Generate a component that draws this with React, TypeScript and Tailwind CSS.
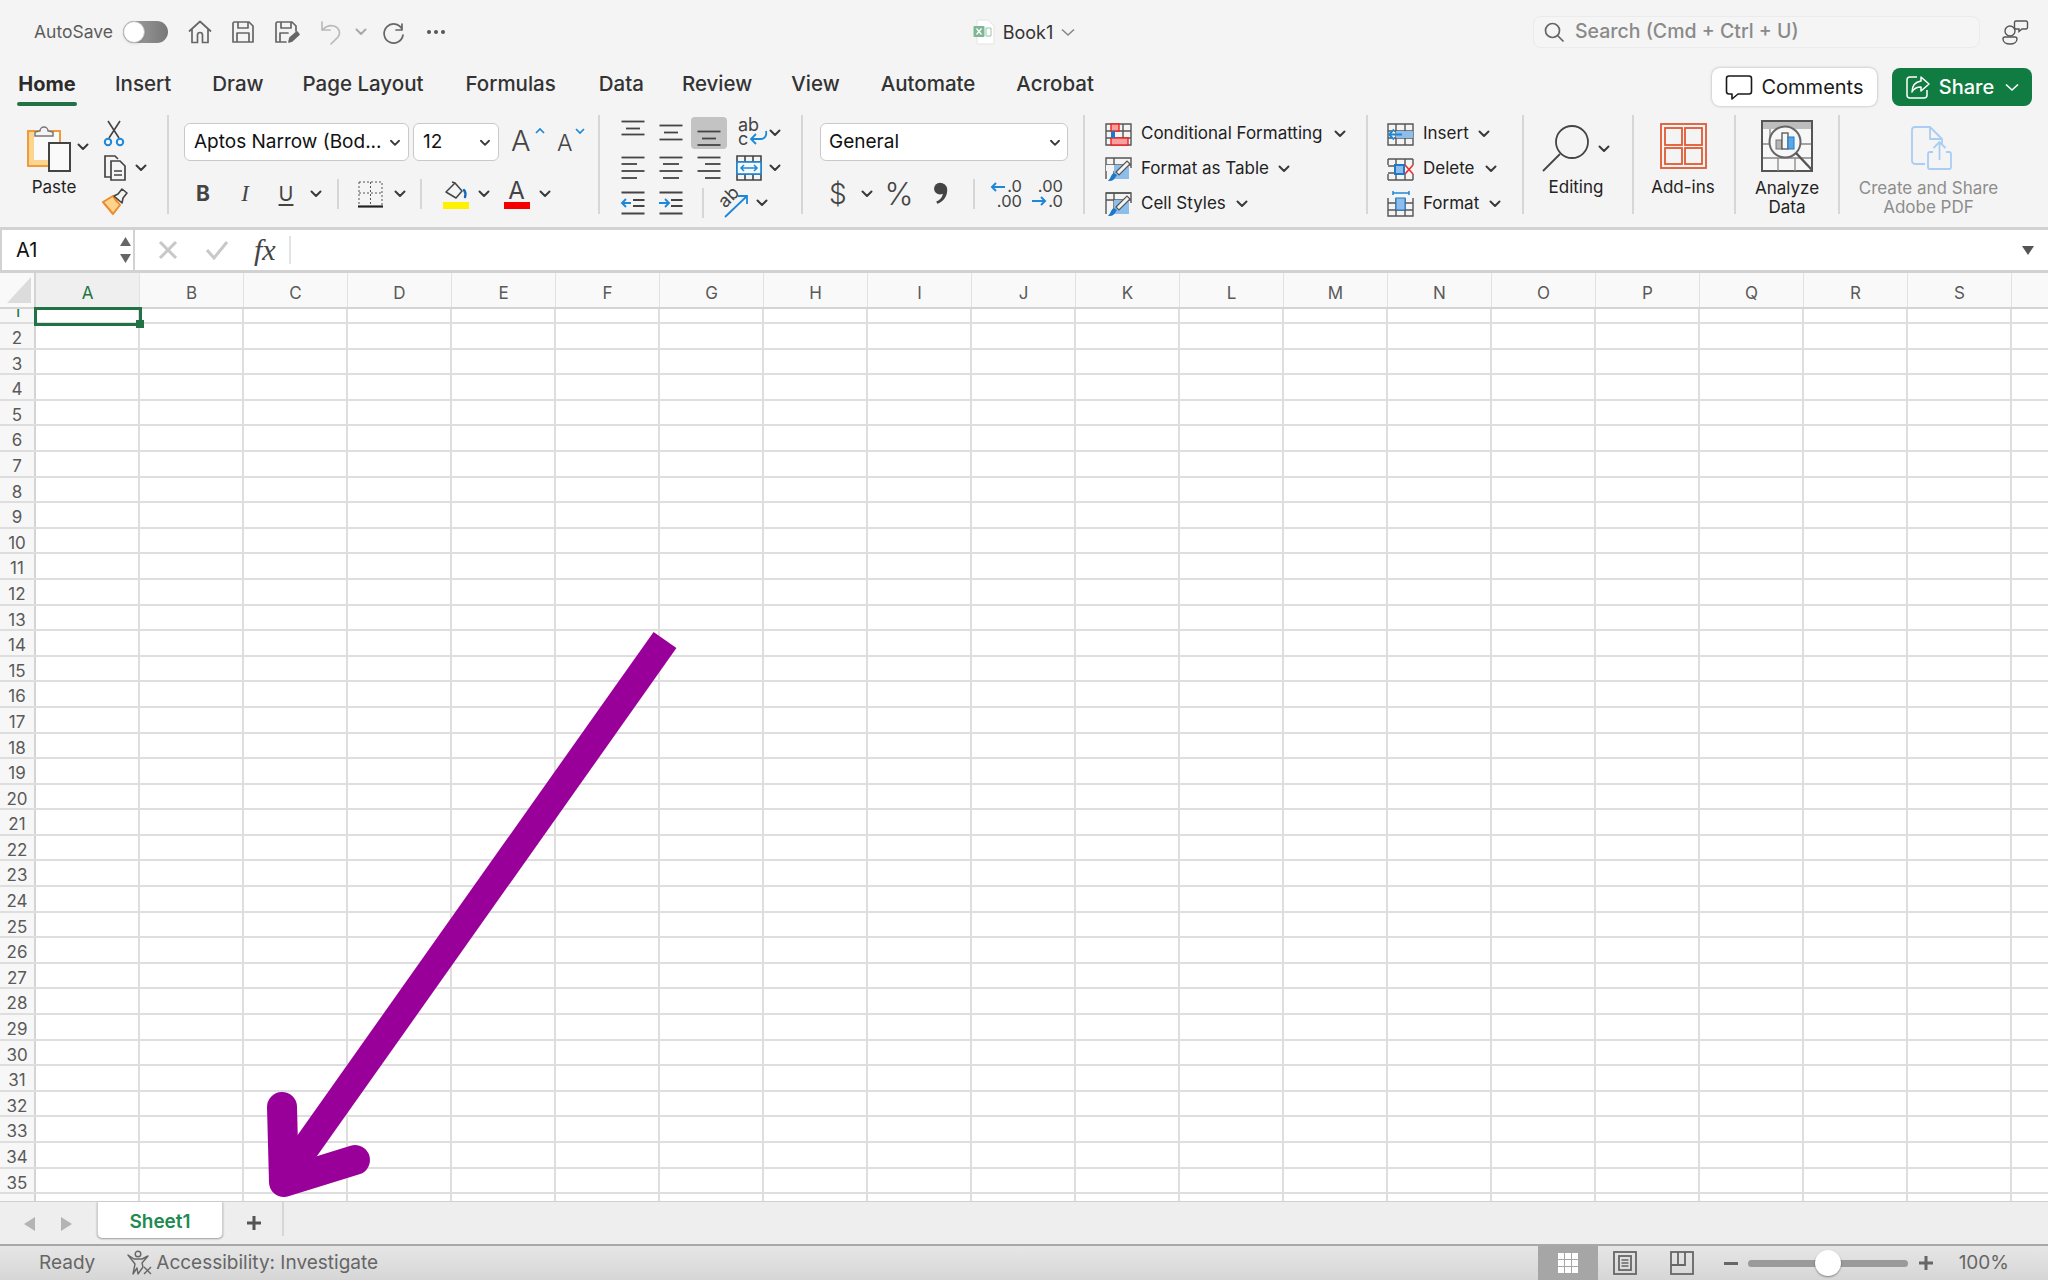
import React from 'react'

const columns = ['A', 'B', 'C', 'D', 'E', 'F', 'G', 'H', 'I', 'J', 'K', 'L', 'M', 'N', 'O', 'P', 'Q', 'R', 'S']
const rows = Array.from({ length: 36 }, (_, i) => i + 1)

const Chev = ({ className = '' }: { className?: string }) => (
    <svg className={`w-[12px] h-[8px] shrink-0 ${className}`} viewBox="0 0 12 8" fill="none">
        <path d="M1.5 1.5 6 6l4.5-4.5" stroke="#3a3a3a" strokeWidth="2" strokeLinecap="round" strokeLinejoin="round" />
    </svg>
)

const Sep = () => <div className="w-[2px] h-[99px] bg-[#d6d6d6] shrink-0" />
const SmallSep = () => <div className="w-[2px] h-[30px] bg-[#d6d6d6] shrink-0" />

const Lines = ({ lines }: { lines: number[][] }) => (
    <svg className="w-[28px] h-[28px]" viewBox="0 0 28 28" fill="none" stroke="#444" strokeWidth="1.8">
        {lines.map(([a, b, y], i) => <path key={i} d={`M${a} ${y}H${b}`} />)}
    </svg>
)

const TitleIcon = ({ children }: { children: React.ReactNode }) => (
    <svg className="w-[28px] h-[28px] shrink-0" viewBox="0 0 28 28" fill="none" stroke="#666" strokeWidth="1.7" strokeLinejoin="round" strokeLinecap="round">
        {children}
    </svg>
)

const TitleBar = () => (
    <div className="flex items-center h-[60px] pt-[4px] shrink-0">
        <span className="ml-[34px] w-[89px] text-[17.5px] text-[#5c5c5c]">AutoSave</span>
        <div className="w-[45px] h-[22px] rounded-full bg-gradient-to-r from-[#a8a8a8] to-[#777] flex items-center">
            <div className="w-[22px] h-[22px] rounded-full bg-white border border-[#bbb] shadow" />
        </div>
        <div className="ml-[18px]">
            <TitleIcon><path d="M3.5 13 14 3.5 24.500 13M6 11v13.500h5.500V17a2.500 2.500 0 0 1 5 0v7.500H22V11" /></TitleIcon>
        </div>
        <div className="ml-[15px]">
            <TitleIcon><path d="M5 4h15l4 4v16H4V5z M9 4v6h10V4 M8 24v-9h12v9" /></TitleIcon>
        </div>
        <div className="ml-[15px]">
            <TitleIcon>
                <path d="M14 24H4V5l1-1h15l4 4v5M9 4v6h10V4M8 24v-9h8" />
                <path d="m17 24 1-4 7-6 2 2.500-7 6.500z" fill="#666" />
            </TitleIcon>
        </div>
        <div className="ml-[18px] opacity-40">
            <TitleIcon><path d="M4 4v8h8M4.500 12C8 8 12 7 16 8c5 1.500 7 7 4 11l-7 7" /></TitleIcon>
        </div>
        <Chev className="ml-[9px] opacity-40" />
        <div className="ml-[13px]">
            <TitleIcon><path d="M22 6v6h-6M22 11a9.500 9.500 0 1 0 1 6" /></TitleIcon>
        </div>
        <div className="ml-[19px] flex gap-[3px]">
            <div className="w-[4px] h-[4px] rounded-full bg-[#555]" />
            <div className="w-[4px] h-[4px] rounded-full bg-[#555]" />
            <div className="w-[4px] h-[4px] rounded-full bg-[#555]" />
        </div>
        <div className="ml-[528px] flex items-center">
            <svg className="w-[22px] h-[26px] shrink-0" viewBox="0 0 22 26">
                <path d="M4 1h11l6 6v18H4z" fill="#fff" stroke="#e4e4e4" />
                <rect x="0.500" y="7" width="11" height="11" rx="1" fill="#7fb796" />
                <path d="M3.500 9.500l5 6M8.500 9.500l-5 6" stroke="#fff" strokeWidth="1.300" />
                <path d="M13 9h5v8h-5z" fill="none" stroke="#98c4aa" />
            </svg>
            <span className="w-[66px] text-center text-[18px] text-[#333]">Book1</span>
            <svg className="w-[14px] h-[9px]" viewBox="0 0 14 9" fill="none"><path d="M1 1.500 7 7l6-5.500" stroke="#888" strokeWidth="1.600" /></svg>
        </div>
        <div className="ml-[458px] w-[447px] h-[32px] rounded-[8px] border border-[#ebebeb] flex items-center bg-[#f5f5f5]">
            <svg className="ml-[9px] w-[22px] h-[22px] shrink-0" viewBox="0 0 22 22" fill="none" stroke="#666" strokeWidth="1.700"><circle cx="9.500" cy="9.500" r="7" /><path d="m14.500 14.500 6 6" /></svg>
            <span className="ml-[10px] text-[19.500px] font-medium text-[#8a8a8a] whitespace-nowrap">Search (Cmd + Ctrl + U)</span>
        </div>
        <svg className="ml-[21px] w-[28px] h-[28px] shrink-0" viewBox="0 0 28 28" fill="none" stroke="#555" strokeWidth="1.400">
            <circle cx="9" cy="13" r="5" /><path d="M2 21c0-1 1-2 2-2h10c1 0 2 1 2 2 0 3-3 5-7 5s-7-2-7-5z" />
            <path d="M15 3h10a1.500 1.500 0 0 1 1.500 1.500v5A1.500 1.500 0 0 1 25 11h-4l-3 2.500V11h-3a1.500 1.500 0 0 1-1.500-1.500v-5A1.500 1.500 0 0 1 15 3z" />
        </svg>
    </div>
)

const tabs = [
    { name: 'Insert', cls: 'ml-[38px]' },
    { name: 'Draw', cls: 'ml-[41px]' },
    { name: 'Page Layout', cls: 'ml-[39px]' },
    { name: 'Formulas', cls: 'ml-[42px]' },
    { name: 'Data', cls: 'ml-[43px]' },
    { name: 'Review', cls: 'ml-[38px]' },
    { name: 'View', cls: 'ml-[39px]' },
    { name: 'Automate', cls: 'ml-[41px]' },
    { name: 'Acrobat', cls: 'ml-[41px]' },
]

const TabRow = () => (
    <div className="flex h-[48px] pl-[17px] shrink-0 items-start">
        <div className="flex flex-col items-center w-[60px] mt-[8px]">
            <span className="text-[20px] leading-[32px] font-bold text-[#2b2b2b]">Home</span>
            <div className="w-[60px] h-[4px] mt-[2px] rounded-full bg-[#217346]" />
        </div>
        {tabs.map(t => (
            <span key={t.name} className={`${t.cls} mt-[8px] text-[20.5px] leading-[32px] font-medium text-[#333] whitespace-nowrap`}>{t.name}</span>
        ))}
        <div className="ml-auto flex gap-[15px] pr-[16px] mt-[8px]">
            <div className="h-[38px] w-[165px] rounded-[8px] bg-white shadow-[0_0_3px_rgba(0,0,0,0.3)] flex items-center justify-center">
                <svg className="w-[28px] h-[26px]" viewBox="0 0 28 26" fill="none" stroke="#1a1a1a" strokeWidth="1.600" strokeLinejoin="round">
                    <path d="M4 2h20a2.500 2.500 0 0 1 2.500 2.500v13A2.500 2.500 0 0 1 24 20H13l-6 5v-5H4a2.500 2.500 0 0 1-2.500-2.500v-13A2.500 2.500 0 0 1 4 2z" />
                </svg>
                <span className="ml-[8px] text-[20px] text-[#1a1a1a]">Comments</span>
            </div>
            <div className="h-[38px] w-[140px] rounded-[8px] bg-[#107c41] flex items-center justify-center text-white">
                <svg className="w-[26px] h-[26px]" viewBox="0 0 26 26" fill="none" stroke="#fff" strokeWidth="1.500" strokeLinejoin="round">
                    <path d="M12 3H5a3 3 0 0 0-3 3v15a3 3 0 0 0 3 3h14a3 3 0 0 0 3-3v-5" />
                    <path d="M16 3l8 7-8 7v-4c-4 0-7 1-9 5 0-6 3-10 9-11z" />
                </svg>
                <span className="ml-[8px] text-[20px] font-medium">Share</span>
                <svg className="ml-[11px] w-[14px] h-[9px]" viewBox="0 0 14 9" fill="none"><path d="M1 1.500 7 7l6-5.500" stroke="#fff" strokeWidth="1.600" /></svg>
            </div>
        </div>
    </div>
)

const ClipboardGroup = () => (
    <div className="flex w-[167px] shrink-0">
        <div className="w-[96px] flex flex-col">
            <div className="flex items-center pl-[25px] pt-[7px]">
                <svg className="w-[47px] h-[50px] shrink-0" viewBox="25 122 47 50" fill="none">
                    <rect x="28" y="131" width="32" height="35" fill="#fbd58e" stroke="#ef9a3d" strokeWidth="2" />
                    <rect x="34" y="132" width="25" height="28" fill="#fafafa" />
                    <path d="M35 136v-4l5-1a4 4 0 0 1 8 0l5 1v4z" fill="#f4f4f4" stroke="#777" strokeWidth="1.500" />
                    <rect x="49" y="143" width="21" height="28" fill="#fafafa" stroke="#444" strokeWidth="2" />
                </svg>
                <Chev className="ml-[5px]" />
            </div>
            <div className="w-[108px] text-center text-[17px] leading-[24px] mt-[3px] text-[#222]">Paste</div>
        </div>
        <div className="flex flex-col">
            <div className="h-[35px] pl-[5px] flex items-center">
                <svg className="w-[26px] h-[28px]" viewBox="0 0 26 28" fill="none">
                    <path d="M7 2l11 17M19 2 8 19" stroke="#444" strokeWidth="1.600" />
                    <circle cx="7" cy="23" r="3.200" stroke="#1e88d8" strokeWidth="2" />
                    <circle cx="19" cy="23" r="3.200" stroke="#1e88d8" strokeWidth="2" />
                </svg>
            </div>
            <div className="h-[35px] pl-[5px] flex items-center">
                <svg className="w-[26px] h-[28px]" viewBox="0 0 26 28" fill="none" stroke="#444" strokeWidth="1.700">
                    <path d="M10 23H4V2h10l3 3" />
                    <path d="M10 7h9l5 5v14H10z" fill="#f4f4f4" />
                    <path d="M13 17h8M13 21h8" strokeWidth="1.300" />
                </svg>
                <Chev className="ml-[8px]" />
            </div>
            <div className="h-[31px] pl-[5px] flex items-center">
                <svg className="w-[28px] h-[28px]" viewBox="0 0 28 28" fill="none">
                    <path d="m2 15 10-6 7 9-7 9z" fill="#fbd58e" stroke="#ef8a2d" strokeWidth="2" strokeLinejoin="round" />
                    <path d="m12 9 4 6" stroke="#ef8a2d" strokeWidth="2" />
                    <path d="m13 9 4-2 4-5 5 4-4 5-1 5z" fill="#f4f4f4" stroke="#444" strokeWidth="1.600" strokeLinejoin="round" />
                </svg>
            </div>
        </div>
    </div>
)

const FontGroup = () => (
    <div className="w-[429px] shrink-0 flex flex-col pt-[8px] pl-[15px]">
        <div className="flex items-center h-[38px]">
            <div className="w-[225px] h-[38px] pt-[1px] rounded-[6px] border border-[#c9c9c9] bg-white flex items-center pl-[9px] pr-[7px] justify-between">
                <span className="text-[19px] text-[#111] whitespace-nowrap">Aptos Narrow (Bod...</span>
                <Chev className="scale-90" />
            </div>
            <div className="ml-[4px] w-[86px] h-[38px] pt-[1px] rounded-[6px] border border-[#c9c9c9] bg-white flex items-center pl-[9px] pr-[7px] justify-between">
                <span className="text-[19px] text-[#111]">12</span>
                <Chev className="scale-90" />
            </div>
            <div className="ml-[12px] w-[28px] h-[30px] relative">
                <span className="absolute left-0 top-[-2px] text-[29px] leading-[32px] font-light text-[#444]">A</span>
                <svg className="absolute right-[-6px] top-[0px] w-[10px] h-[7px]" viewBox="0 0 10 7" fill="none"><path d="m1 6 4-4 4 4" stroke="#1e88d8" strokeWidth="1.700" /></svg>
            </div>
            <div className="ml-[18px] w-[26px] h-[30px] relative">
                <span className="absolute left-0 top-0 text-[23px] leading-[32px] font-light text-[#444]">A</span>
                <svg className="absolute right-[-2px] top-[1px] w-[10px] h-[7px]" viewBox="0 0 10 7" fill="none"><path d="m1 1 4 4 4-4" stroke="#1e88d8" strokeWidth="1.700" /></svg>
            </div>
        </div>
        <div className="flex items-center h-[38px] mt-[14px]">
            <span className="ml-[12px] w-[14px] text-center text-[21px] font-bold text-[#444]">B</span>
            <span className="ml-[28px] w-[14px] text-center text-[23px] italic font-['Liberation_Serif',serif] text-[#444]">I</span>
            <span className="ml-[26px] w-[16px] text-center text-[20px] underline underline-offset-[3px] text-[#444]">U</span>
            <Chev className="ml-[16px]" />
            <div className="ml-[15px]"><SmallSep /></div>
            <svg className="ml-[18px] w-[27px] h-[30px]" viewBox="0 0 27 30" fill="none">
                <path d="M2 3h23v23M2 3v23M13.500 3v23M2 14h23" stroke="#555" strokeDasharray="2 2" />
                <path d="M1 27.500h25" stroke="#222" strokeWidth="2.200" />
            </svg>
            <Chev className="ml-[10px]" />
            <div className="ml-[14px]"><SmallSep /></div>
            <div className="ml-[20px] w-[27px] flex flex-col items-center">
                <svg className="w-[24px] h-[22px]" viewBox="0 0 24 22" fill="none">
                    <path d="m2 12 9-9 7 8-6 7z" stroke="#444" strokeWidth="1.500" strokeLinejoin="round" />
                    <path d="M8 2l3 1" stroke="#444" strokeWidth="1.500" />
                    <path d="M20 10c1.500 2 2 4 1 7" stroke="#1565b8" strokeWidth="2.400" strokeLinecap="round" />
                </svg>
                <div className="w-[26px] h-[7px] bg-[#fff200]" />
            </div>
            <Chev className="ml-[9px]" />
            <div className="ml-[13px] w-[27px] flex flex-col items-center">
                <span className="text-[24px] leading-[22px] text-[#444]">A</span>
                <div className="w-[26px] h-[7px] bg-[#f50000]" />
            </div>
            <Chev className="ml-[9px]" />
        </div>
    </div>
)

const AlignGroup = () => (
    <div className="w-[201px] shrink-0 flex flex-col pl-[14px]">
        <div className="flex items-center h-[35px]">
            <div className="w-[38px] flex justify-center"><Lines lines={[[2.5, 25.5, 2.5], [7, 21, 9.5], [2.5, 25.5, 15.5]]} /></div>
            <div className="w-[38px] flex justify-center"><Lines lines={[[2.5, 25.5, 6.5], [7, 21, 13.5], [2.5, 25.5, 20.5]]} /></div>
            <div className="w-[36px] mx-[1px] h-[32px] flex justify-center items-center rounded-[4px] bg-[#c3c3c3]"><Lines lines={[[2.5, 25.5, 12.5], [7, 21, 19.5], [2.5, 25.5, 26]]} /></div>
            <div className="w-[41px] pl-[10px] h-[32px] relative text-[#444] text-[18px] leading-[14px] pt-[1px]">
                <div>ab<br />c</div>
                <svg className="absolute left-[20px] top-[12px] w-[22px] h-[20px]" viewBox="0 0 22 20" fill="none"><path d="M18 2c1 4-1 8-5 8H4m4-5-5 5 5 5" stroke="#1e88d8" strokeWidth="1.800" /></svg>
            </div>
            <Chev />
        </div>
        <div className="flex items-center h-[35px]">
            <div className="w-[38px] flex justify-center"><Lines lines={[[2.5, 25.5, 3.5], [2.5, 18, 10], [2.5, 25.5, 17], [2.5, 18, 24]]} /></div>
            <div className="w-[38px] flex justify-center"><Lines lines={[[2.5, 25.5, 3.5], [6, 22, 10], [2.5, 25.5, 17], [6, 22, 24]]} /></div>
            <div className="w-[38px] flex justify-center"><Lines lines={[[2.5, 25.5, 3.5], [10, 25.5, 10], [2.5, 25.5, 17], [10, 25.5, 24]]} /></div>
            <div className="w-[41px] flex justify-center">
                <svg className="w-[26px] h-[26px]" viewBox="0 0 26 26" fill="none">
                    <path d="M1 1h24v24H1zM1 7h24M1 19h24M9 1v6M17 1v6M9 19v6M17 19v6" stroke="#444" strokeWidth="1.600" />
                    <rect x="1" y="7" width="24" height="12" stroke="#1e88d8" strokeWidth="1.600" fill="#f4f9fd" />
                    <path d="M5 13h16M8 10l-3 3 3 3M18 10l3 3-3 3" stroke="#1e88d8" strokeWidth="1.500" />
                </svg>
            </div>
            <Chev />
        </div>
        <div className="flex items-center h-[35px]">
            <div className="w-[38px] flex justify-center">
                <svg className="w-[28px] h-[28px]" viewBox="0 0 28 28" fill="none">
                    <path d="M2.500 3.500h23M14 11h11.500M14 17h11.500M2.500 24.500h23" stroke="#444" strokeWidth="1.800" />
                    <path d="M12 14H3m4-4-4 4 4 4" stroke="#1e88d8" strokeWidth="1.900" />
                </svg>
            </div>
            <div className="w-[38px] flex justify-center">
                <svg className="w-[28px] h-[28px]" viewBox="0 0 28 28" fill="none">
                    <path d="M2.500 3.500h23M14 11h11.500M14 17h11.500M2.500 24.500h23" stroke="#444" strokeWidth="1.800" />
                    <path d="M2 14h10m-4-4 4 4-4 4" stroke="#1e88d8" strokeWidth="1.900" />
                </svg>
            </div>
            <div className="ml-[12px]"><SmallSep /></div>
            <div className="ml-[15px] w-[32px] h-[32px] relative">
                <span className="absolute left-[-1px] top-[0px] text-[18px] leading-[20px] text-[#444] -rotate-45">ab</span>
                <svg className="absolute left-0 top-0 w-[32px] h-[32px]" viewBox="0 0 32 32" fill="none"><path d="M6 30 28 9m-9 0h9v8" stroke="#1e88d8" strokeWidth="1.800" /></svg>
            </div>
            <Chev className="ml-[5px]" />
        </div>
    </div>
)

const NumberGroup = () => (
    <div className="w-[280px] shrink-0 flex flex-col pt-[8px] pl-[17px]">
        <div className="w-[248px] h-[38px] pt-[1px] rounded-[6px] border border-[#c9c9c9] bg-white flex items-center pl-[8px] pr-[6px] justify-between">
            <span className="text-[19px] text-[#111]">General</span>
            <Chev className="scale-90" />
        </div>
        <div className="flex items-center h-[38px] mt-[14px] text-[#444]">
            <span className="ml-[9px] w-[16px] text-center text-[28px] font-light leading-[38px]">$</span>
            <Chev className="ml-[16px]" />
            <span className="ml-[10px] w-[32px] text-center text-[31px] font-light leading-[38px]">%</span>
            <svg className="ml-[18px] w-[15px] h-[24px]" viewBox="0 0 14 22" fill="#444"><circle cx="6.500" cy="6" r="5.500" /><path d="M8 1c5 1 6 5 5 9-1 5-5 9-9 10l-1-2c3-1 5-3 6-6z" /></svg>
            <div className="ml-[25px]"><SmallSep /></div>
            <div className="ml-[19px] w-[28px] h-[30px] relative text-[16.500px] leading-[15px] text-right">
                <div>.0<br />.00</div>
                <svg className="absolute left-[-4px] top-[2px] w-[16px] h-[12px]" viewBox="0 0 16 12" fill="none"><path d="M15 6H2m4-4-4 4 4 4" stroke="#1e88d8" strokeWidth="2" /></svg>
            </div>
            <div className="ml-[13px] w-[28px] h-[30px] relative text-[16.500px] leading-[15px] text-right">
                <div>.00<br />.0</div>
                <svg className="absolute left-[-4px] top-[16px] w-[16px] h-[12px]" viewBox="0 0 16 12" fill="none"><path d="M1 6h13m-4-4 4 4-4 4" stroke="#1e88d8" strokeWidth="2" /></svg>
            </div>
        </div>
    </div>
)

const Cf = () => (
    <svg className="w-[27px] h-[23px] shrink-0" viewBox="0 0 27 23" fill="none">
        <path d="M1 1h25v21H1zM1 8h25M1 15h25M9 1v21M18 1v21" stroke="#555" strokeWidth="1.400" />
        <rect x="6" y="1" width="8" height="7" fill="#f7a0a0" stroke="#e22" strokeWidth="1.400" />
        <rect x="6" y="15" width="17" height="7" fill="#f7a0a0" stroke="#e22" strokeWidth="1.400" />
        <rect x="6" y="8" width="4" height="7" fill="#1e78c8" />
    </svg>
)

const Brush = ({ table }: { table: boolean }) => (
    <svg className="w-[27px] h-[25px] shrink-0" viewBox="0 0 27 25" fill="none">
        <path d="M1 22V1h25v10M1 8h25M9 1v21" stroke="#555" strokeWidth="1.400" />
        {!table && <path d="M1 1h25" stroke="#555" strokeWidth="1.400" />}
        <path d="M9 8h15v14H9z" fill="#8dbdea" />
        {table && <path d="M1 8h8v6H1z" fill="#f4f4f4" />}
        <path d="M3 24c3 0 5 0 7-3l2-3-3-2c-3 1-3 5-6 8z" fill="#1e78c8" />
        <path d="m11 15 11-11 3 3-11 11z" fill="#f4f4f4" stroke="#555" strokeWidth="1.200" />
    </svg>
)

const StylesGroup = () => (
    <div className="w-[281px] shrink-0 flex flex-col pl-[20px] pt-[1.500px] text-[17px] text-[#222]">
        <div className="flex items-center h-[35px]"><Cf /><span className="ml-[9px] whitespace-nowrap">Conditional Formatting</span><Chev className="ml-[11px]" /></div>
        <div className="flex items-center h-[35px]"><Brush table /><span className="ml-[9px] whitespace-nowrap">Format as Table</span><Chev className="ml-[9px]" /></div>
        <div className="flex items-center h-[35px]"><Brush table={false} /><span className="ml-[9px] whitespace-nowrap">Cell Styles</span><Chev className="ml-[10px]" /></div>
    </div>
)

const CellsGroup = () => (
    <div className="w-[154px] shrink-0 flex flex-col pl-[19px] pt-[1.500px] text-[17px] text-[#222]">
        <div className="flex items-center h-[35px]">
            <svg className="w-[27px] h-[23px] shrink-0" viewBox="0 0 27 23" fill="none">
                <path d="M1 1h25v21H1zM1 8h25M1 15h25M9 1v21M18 1v21" stroke="#555" strokeWidth="1.400" />
                <rect x="9" y="8" width="17" height="7" fill="#8dbdea" />
                <path d="M15 11.500H2m5-5-5 5 5 5" stroke="#1e88d8" strokeWidth="1.800" fill="#f4f4f4" />
            </svg>
            <span className="ml-[9px]">Insert</span><Chev className="ml-[9px]" />
        </div>
        <div className="flex items-center h-[35px]">
            <svg className="w-[27px] h-[23px] shrink-0" viewBox="0 0 27 23" fill="none">
                <path d="M1 1h25M1 22h25M1 1v6M1 16v6M9 1v6M18 1v6M9 16v6M18 16v6M1 8h9M1 15h9M26 1v6M26 16v6" stroke="#555" strokeWidth="1.400" />
                <rect x="8" y="7" width="9" height="9" fill="#8dbdea" stroke="#1e78c8" strokeWidth="2" />
                <path d="m18 7 8 9M26 7l-8 9" stroke="#ee3030" strokeWidth="1.700" />
            </svg>
            <span className="ml-[9px]">Delete</span><Chev className="ml-[10px]" />
        </div>
        <div className="flex items-center h-[35px]">
            <svg className="w-[27px] h-[26px] shrink-0" viewBox="0 0 27 26" fill="none">
                <path d="M1 7v18h25V7M1 12h25M1 19h25M9 7v18M18 7v18" stroke="#555" strokeWidth="1.400" />
                <rect x="9" y="7" width="9" height="12" fill="#8dbdea" stroke="#1e78c8" />
                <path d="M6 2h16M6 0v4M22 0v4" stroke="#1e88d8" strokeWidth="1.500" />
            </svg>
            <span className="ml-[9px]">Format</span><Chev className="ml-[10px]" />
        </div>
    </div>
)

const BigLabel = ({ children, className = '' }: { children: React.ReactNode; className?: string }) => (
    <div className={`text-center text-[17px] leading-[19px] text-[#222] ${className}`}>{children}</div>
)

const EditingGroup = () => (
    <div className="w-[108px] shrink-0 flex flex-col pt-[9px]">
        <div className="flex items-center h-[50px] pl-[17px]">
            <svg className="w-[50px] h-[50px]" viewBox="0 0 50 50" fill="none" stroke="#444" strokeWidth="1.800">
                <circle cx="31" cy="18" r="16" /><path d="M19 30 2 47" />
            </svg>
            <Chev className="ml-[7px]" />
        </div>
        <BigLabel className="w-[104px] mt-[4px]">Editing</BigLabel>
    </div>
)

const AddinsGroup = () => (
    <div className="w-[100px] pr-[2px] shrink-0 flex flex-col pt-[8px] items-center">
        <svg className="w-[47px] h-[46px] mb-[9px]" viewBox="0 0 47 46" fill="none" stroke="#e05a33" strokeWidth="1.800">
            <rect x="1" y="1" width="45" height="44" />
            <rect x="5" y="5" width="17" height="17" /><rect x="25" y="5" width="17" height="17" />
            <rect x="5" y="25" width="17" height="16" /><rect x="25" y="25" width="17" height="16" />
        </svg>
        <BigLabel>Add-ins</BigLabel>
    </div>
)

const AnalyzeGroup = () => (
    <div className="w-[102px] shrink-0 flex flex-col pt-[5px] items-center">
        <svg className="w-[52px] h-[52px] mb-[7px]" viewBox="0 0 52 52" fill="none">
            <rect x="1" y="1" width="50" height="50" stroke="#555" strokeWidth="2" fill="#f7f7f7" />
            <rect x="2" y="2" width="48" height="7" fill="#bdbdbd" />
            <path d="M2 24h48M2 38h48M17 38v13M34 38v13M9 9v15" stroke="#888" strokeWidth="1.300" />
            <circle cx="24" cy="22" r="15.500" fill="#f7f7f7" stroke="#666" strokeWidth="2" />
            <rect x="15" y="20" width="6" height="9" fill="#b5b5b5" stroke="#777" />
            <rect x="21" y="13" width="6" height="16" fill="#f7f7f7" stroke="#555" strokeWidth="1.300" />
            <rect x="27" y="17" width="6" height="12" fill="#5aa7e5" stroke="#1e78c8" />
            <path d="m35 33 16 17" stroke="#555" strokeWidth="2.400" />
        </svg>
        <BigLabel>Analyze<br />Data</BigLabel>
    </div>
)

const AdobeGroup = () => (
    <div className="flex-1 flex flex-col pt-[11px] pl-[2px] w-[180px]">
        <div className="w-[180px] flex justify-center mb-[7px]">
            <svg className="w-[42px] h-[46px]" viewBox="0 0 42 46" fill="none" stroke="#a9cdf5" strokeWidth="1.800" strokeLinejoin="round">
                <path d="M14 38H4a3 3 0 0 1-3-3V4a3 3 0 0 1 3-3h15l12 12v6M19 1v12h12" />
                <path d="M22 26h-3a2 2 0 0 0-2 2v13a2 2 0 0 0 2 2h19a2 2 0 0 0 2-2V28a2 2 0 0 0-2-2h-3M28.500 34V16m-6 6 6-6 6 6" />
            </svg>
        </div>
        <BigLabel className="w-[173px] !text-[#8d8d8d]">Create and Share<br />Adobe PDF</BigLabel>
    </div>
)

const Ribbon = () => (
    <div className="flex h-[122px] pt-[7px] shrink-0 border-b-[3px] border-[#d2d2d2] overflow-hidden">
        <ClipboardGroup />
        <Sep />
        <FontGroup />
        <Sep />
        <AlignGroup />
        <Sep />
        <NumberGroup />
        <Sep />
        <StylesGroup />
        <Sep />
        <CellsGroup />
        <Sep />
        <EditingGroup />
        <Sep />
        <AddinsGroup />
        <Sep />
        <AnalyzeGroup />
        <Sep />
        <AdobeGroup />
    </div>
)

const FormulaBar = () => (
    <div className="flex h-[43px] shrink-0 bg-white border-b-[3px] border-[#d2d2d2]">
        <div className="w-[135px] h-[40px] border-x-[2px] border-[#d2d2d2] flex items-center justify-between pl-[14px] pr-[1px]">
            <span className="text-[20px] text-[#111]">A1</span>
            <svg className="w-[13px] h-[28px]" viewBox="0 0 13 28" fill="#666"><path d="M6.500 1 12 10H1zM1 18h11l-5.500 9z" /></svg>
        </div>
        <svg className="ml-[23px] w-[20px] h-[20px] self-center" viewBox="0 0 20 20" fill="none" stroke="#c8c8c8" strokeWidth="3"><path d="m2 2 16 16M18 2 2 18" /></svg>
        <svg className="ml-[27px] w-[24px] h-[20px] self-center" viewBox="0 0 24 20" fill="none" stroke="#c8c8c8" strokeWidth="3"><path d="m2 10 7 8L22 2" /></svg>
        <span className="ml-[25px] self-center text-[30px] italic font-['Liberation_Serif',serif] text-[#444] leading-none">fx</span>
        <div className="ml-[13px] w-[2px] h-[28px] self-center bg-[#e3e3e3]" />
        <svg className="ml-auto mr-[14px] w-[12px] h-[9px] self-center" viewBox="0 0 12 9" fill="#555"><path d="M0 0h12L6 9z" /></svg>
    </div>
)

const Grid = () => (
    <div className="flex-1 min-h-0 overflow-hidden relative">
        <div className="flex h-[36px] bg-[#f9f9f9] border-b-2 border-[#d4d4d4]">
            <div className="w-[36px] shrink-0 border-r-2 border-[#d4d4d4] flex items-end justify-end pr-[3px] pb-[4px]">
                <svg className="w-[24px] h-[26px]" viewBox="0 0 24 26"><path d="M24 0v26H0z" fill="#dcdcdc" /></svg>
            </div>
            {columns.map(c => (
                <div key={c} className={`w-[104px] shrink-0 pt-[7px] border-r border-[#e2e2e2] flex items-center justify-center text-[17px] ${c === 'A' ? 'bg-[#efefef] text-[#217346]' : 'text-[#5a5a5a]'}`}>{c}</div>
            ))}
        </div>
        {rows.map(r => (
            <div key={r} className={`flex border-b-2 border-[#dedede] ${r === 1 ? 'h-[15px] items-end' : 'h-[25.6px]'}`}>
                <div className={`w-[36px] shrink-0 border-r-2 border-[#d4d4d4] bg-[#f7f7f7] text-[17px] text-center overflow-hidden self-stretch ${r === 1 ? 'text-[#217346]' : 'text-[#5a5a5a]'}`}>
                    <div className={`leading-[28px] ${r === 1 ? 'mt-[-12px]' : ''}`}>{r < 36 ? r : ''}</div>
                </div>
                {columns.map(c => <div key={c} className="w-[104px] shrink-0 self-stretch border-r-2 border-[#dedede] bg-white" />)}
                <div className="flex-1 self-stretch bg-white" />
            </div>
        ))}
        <div className="absolute left-[34px] top-[34px] w-[108px] h-[19px] border-[3px] border-[#217346]" />
        <div className="absolute left-[136px] top-[47px] w-[8px] h-[8px] bg-[#217346]" />
    </div>
)

const SheetBar = () => (
    <div className="flex h-[43px] shrink-0 bg-[#eeeeee] border-t border-[#d0d0d0]">
        <svg className="ml-[23px] mt-[14px] w-[13px] h-[16px]" viewBox="0 0 13 16" fill="#b4b4b4"><path d="M12 1v14L1 8z" /></svg>
        <svg className="ml-[24px] mt-[14px] w-[13px] h-[16px]" viewBox="0 0 13 16" fill="#b4b4b4"><path d="M1 1v14l11-7z" /></svg>
        <div className="ml-[24px] w-[126px] h-[36px] pt-[4px] rounded-b-[5px] bg-white shadow-[0_1px_2px_rgba(0,0,0,0.35)] border-x border-[#d0d0d0] flex items-center justify-center text-[19px] font-semibold text-[#1f8a52]">Sheet1</div>
        <svg className="ml-[22px] mt-[12px] w-[18px] h-[18px]" viewBox="0 0 18 18" fill="none" stroke="#555" strokeWidth="3"><path d="M9 2v14M2 9h14" /></svg>
        <div className="ml-[19px] w-[2px] h-[34px] bg-[#d6d6d6]" />
    </div>
)

const StatusBar = () => (
    <div className="flex h-[36px] shrink-0 items-center bg-gradient-to-b from-[#e6e6e6] to-[#d6d6d6] border-t-2 border-[#a8a8a8] text-[#666] text-[19px]">
        <span className="ml-[39px]">Ready</span>
        <svg className="ml-[31px] w-[26px] h-[26px]" viewBox="0 0 26 26" fill="none" stroke="#666" strokeWidth="1.400" strokeLinejoin="round">
            <circle cx="12" cy="4" r="2.800" />
            <path d="M2 5l6 4 8 0 6-3-6 7 1 4-5 7-1-6-4 6 2-10z" />
            <path d="m18 17 7 7M25 17l-7 7" />
        </svg>
        <span className="ml-[4px]">Accessibility: Investigate</span>
        <div className="ml-auto flex items-center h-full">
            <div className="w-[60px] h-full bg-[#a6a6a6] flex items-center justify-center">
                <svg className="w-[22px] h-[22px]" viewBox="0 0 22 22" fill="#fff"><path d="M1 1h6v6H1zM8 1h6v6H8zM15 1h6v6h-6zM1 8h6v6H1zM8 8h6v6H8zM15 8h6v6h-6zM1 15h6v6H1zM8 15h6v6H8zM15 15h6v6h-6z" /></svg>
            </div>
            <svg className="ml-[15px] w-[24px] h-[24px]" viewBox="0 0 24 24" fill="none" stroke="#666" strokeWidth="1.800"><rect x="1" y="1" width="22" height="22" /><rect x="6" y="5" width="12" height="14" /><path d="M8.500 9h7M8.500 12h7M8.500 15h7" strokeWidth="1.300" /></svg>
            <svg className="ml-[33px] w-[24px] h-[24px]" viewBox="0 0 24 24" fill="none" stroke="#666" strokeWidth="1.800"><rect x="1" y="1" width="22" height="22" /><path d="M1 14h14V1M8 1v13" /></svg>
            <div className="ml-[30px] w-[14px] h-[3px] bg-[#666]" />
            <div className="ml-[10px] w-[160px] h-[7px] rounded-full bg-[#9a9a9a] flex items-center">
                <div className="ml-[67px] w-[26px] h-[26px] rounded-full bg-white shadow-[0_1px_2px_rgba(0,0,0,0.4)]" />
            </div>
            <svg className="ml-[11px] w-[14px] h-[14px]" viewBox="0 0 14 14" fill="none" stroke="#666" strokeWidth="3"><path d="M7 0v14M0 7h14" /></svg>
            <span className="ml-[26px] mr-[39px] text-[#666]">100%</span>
        </div>
    </div>
)

const App = () => {
    return (
        <div className="relative w-[2048px] h-[1280px] overflow-hidden flex flex-col bg-[#f4f4f4] font-['Inter',sans-serif]">
            <TitleBar />
            <TabRow />
            <Ribbon />
            <FormulaBar />
            <Grid />
            <SheetBar />
            <StatusBar />
            {/* purple annotation arrow drawn over the sheet */}
            <svg className="absolute left-0 top-0 w-[2048px] h-[1280px] pointer-events-none" viewBox="0 0 2048 1280" fill="none" stroke="#990099">
                <path d="M665 640 290 1170" strokeWidth="28" />
                <path d="M282 1107 284 1182 355 1160" strokeWidth="30" strokeLinecap="round" strokeLinejoin="round" />
            </svg>
        </div>
    )
}

export default App
